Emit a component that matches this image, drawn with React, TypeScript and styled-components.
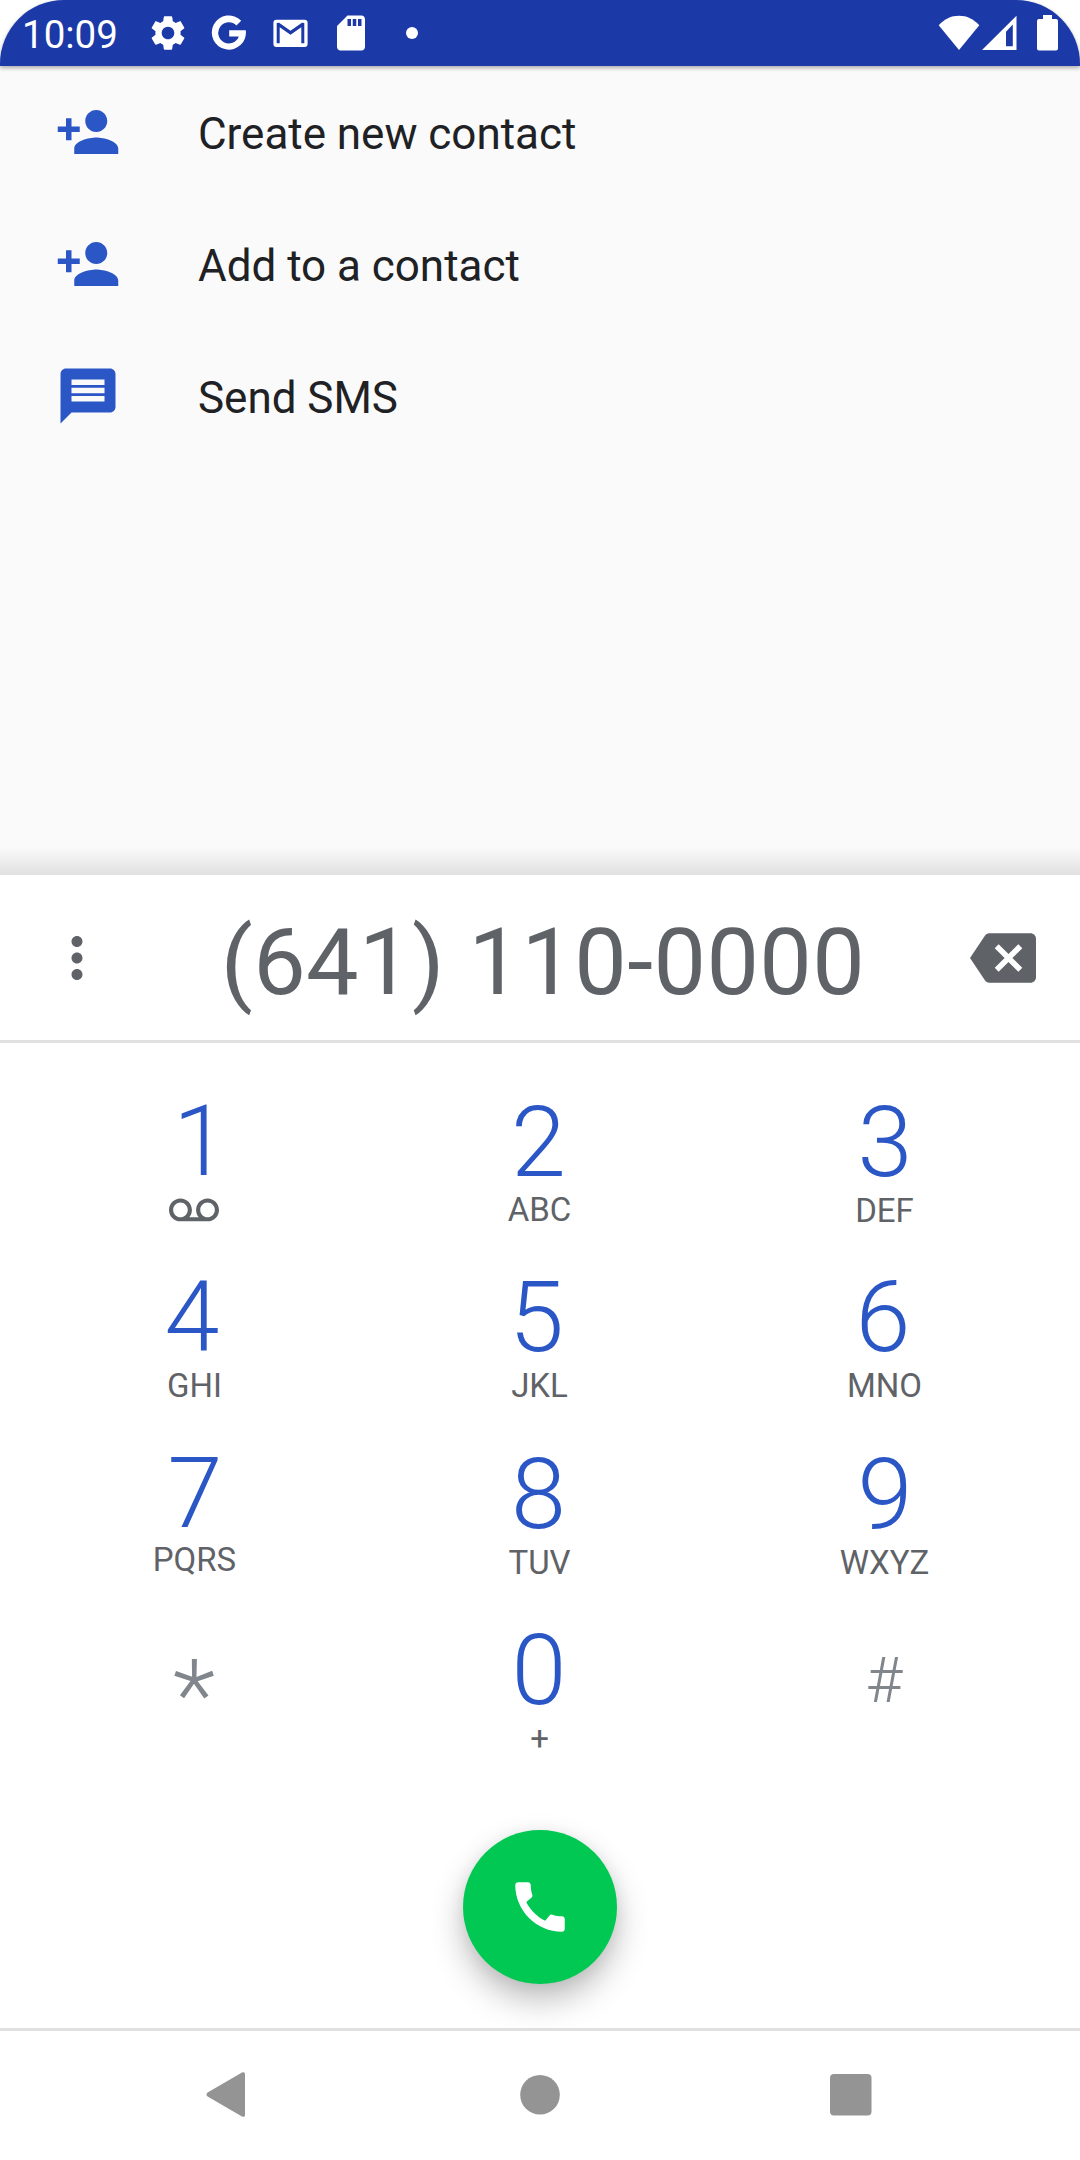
import React from "react";
import styled, { createGlobalStyle } from "styled-components";

const GlobalStyle = createGlobalStyle`
  html, body { margin: 0; padding: 0; background: #ffffff; }
  *, *::before, *::after { box-sizing: border-box; }
  button { border: 0; padding: 0; margin: 0; background: none; font: inherit; color: inherit; }
`;

const Phone = styled.div`
  width: 1080px;
  height: 2160px;
  display: flex;
  flex-direction: column;
  overflow: hidden;
  background: #ffffff;
  font-family: Roboto, "Noto Sans", sans-serif;
`;

const StatusBar = styled.header`
  position: relative;
  z-index: 1;
  flex: none;
  height: 66px;
  display: flex;
  align-items: center;
  padding-right: 22px;
  padding-left: 22px;
  border-radius: 64px 64px 0 0;
  background: #1c39a8;
  color: #ffffff;
  box-shadow: 0 2px 4px rgba(0, 0, 0, 0.32);
`;

const Clock = styled.span`
  width: 125px;
  font-size: 38.5px;
  line-height: 45px;
  padding-top: 2px;
`;

const Notifications = styled.div`
  display: flex;
  align-items: center;
  gap: 19px;
  flex: 1;
`;

const SystemIcons = styled.div`
  display: flex;
  align-items: center;
`;

const Glyph = styled.svg<{ $w: number; $h?: number; $gap?: number }>`
  display: block;
  flex: none;
  width: ${(p) => p.$w}px;
  height: ${(p) => p.$h ?? p.$w}px;
  margin-left: ${(p) => p.$gap ?? 0}px;
  fill: currentColor;
`;

const Actions = styled.main`
  flex: none;
  height: 809px;
  display: flex;
  flex-direction: column;
  background: #fafafa;
`;

const ActionRow = styled.button`
  flex: none;
  height: 132px;
  display: flex;
  align-items: center;
  gap: 77px;
  padding-left: 55px;
  color: #2a56c6;
  text-align: left;
`;

const ActionLabel = styled.span`
  padding-top: 4px;
  font-size: 44px;
  line-height: 52px;
  letter-spacing: -0.03px;
  color: #202124;
`;

const PanelShadow = styled.div`
  flex: none;
  height: 28px;
  margin-top: auto;
  background: linear-gradient(to bottom, #fafafa, #e0e0e0);
`;

const NumberBar = styled.section`
  flex: none;
  height: 168px;
  display: flex;
  align-items: center;
  padding: 0 44px;
  border-bottom: 3px solid #e1e1e1;
  color: #5f6368;
`;

const NumberText = styled.div`
  flex: 1;
  padding: 8px 0 0 6px;
  font-size: 93.5px;
  line-height: 110px;
  letter-spacing: 0.38px;
  text-align: center;
  white-space: pre;
`;

const Keypad = styled.section`
  flex: none;
  display: grid;
  grid-template-columns: repeat(3, 345px);
  grid-auto-rows: 176px;
  padding: 48px 22px 0;
`;

const Key = styled.button`
  display: flex;
  flex-direction: column;
  align-items: center;
`;

const Digit = styled.span<{ $indent: number; $drop: number }>`
  margin-top: ${(p) => p.$drop}px;
  margin-left: ${(p) => p.$indent}px;
  font-size: 99px;
  font-weight: 300;
  line-height: 100px;
  color: #2a56c6;
`;

const SymbolText = styled.span<{ $top: number; $size: number }>`
  padding-top: ${(p) => p.$top}px;
  padding-right: 1px;
  font-size: ${(p) => p.$size}px;
  font-weight: 300;
  line-height: 74px;
  color: #80868b;
`;

const Letters = styled.span<{ $top: number }>`
  margin-top: ${(p) => p.$top}px;
  font-size: 33px;
  line-height: 40px;
  color: #5f6368;
`;

const VoicemailSlot = styled.span`
  padding-top: 7px;
  padding-right: 1px;
  color: #5f6368;
`;

const CallArea = styled.section`
  flex: 1;
  display: flex;
  justify-content: center;
  padding-top: 35px;
`;

const CallButton = styled.button`
  width: 154px;
  height: 154px;
  display: flex;
  align-items: center;
  justify-content: center;
  border-radius: 50%;
  background: #00c853;
  color: #ffffff;
  box-shadow: 0 16px 32px rgba(0, 0, 0, 0.26), 0 2px 16px rgba(0, 0, 0, 0.06);
`;

const NavBar = styled.nav`
  position: relative;
  flex: none;
  height: 132px;
  display: flex;
  align-items: center;
  padding: 0 0 2px 206px;
  border-top: 3px solid #e0e0e0;
  background: #ffffff;
  color: #949494;
`;

const PERSON_ADD =
  "M15 12c2.21 0 4-1.79 4-4s-1.79-4-4-4-4 1.79-4 4 1.79 4 4 4zm-9-2V7H4v3H1v2h3v3h2v-3h3v-2H6zm9 4c-2.67 0-8 1.34-8 4v2h16v-2c0-2.66-5.33-4-8-4z";
const MESSAGE =
  "M20 2H4c-1.1 0-1.99.9-1.99 2L2 22l4-4h14c1.1 0 2-.9 2-2V4c0-1.1-.9-2-2-2zm-2 12H6v-2h12v2zm0-3H6V9h12v2zm0-3H6V6h12v2z";

const actions = [
  { label: "Create new contact", path: PERSON_ADD },
  { label: "Add to a contact", path: PERSON_ADD },
  { label: "Send SMS", path: MESSAGE },
];

type KeyDef = {
  digit?: string;
  letters?: string;
  top?: number;
  indent?: number;
  drop?: number;
  symbol?: string;
  size?: number;
};

const keys: KeyDef[] = [
  { digit: "1", indent: 12 },
  { digit: "2", indent: -2, drop: 1, letters: "ABC", top: -2 },
  { digit: "3", indent: 1, drop: 1, letters: "DEF", top: -1 },
  { digit: "4", indent: -5, letters: "GHI", top: -1 },
  { digit: "5", indent: -6, letters: "JKL", top: -1 },
  { digit: "6", indent: -3, letters: "MNO", top: -1 },
  { digit: "7", indent: 1, letters: "PQRS", top: -3 },
  { digit: "8", indent: -2, drop: 1, letters: "TUV", top: -1 },
  { digit: "9", indent: 1, drop: 1, letters: "WXYZ", top: -1 },
  { symbol: "*", size: 99, top: 39 },
  { digit: "0", indent: -1, drop: 1, letters: "+", top: -1 },
  { symbol: "#", size: 63, top: 25 },
];

function StatusIcons() {
  return (
    <>
      <Notifications>
        <Glyph $w={42} viewBox="0 0 24 24">
          <path d="M19.14 12.94c.04-.3.06-.61.06-.94 0-.32-.02-.64-.07-.94l2.03-1.58c.18-.14.23-.41.12-.61l-1.92-3.32c-.12-.22-.37-.29-.59-.22l-2.39.96c-.5-.38-1.03-.7-1.62-.94l-.36-2.54c-.04-.24-.24-.41-.48-.41h-3.84c-.24 0-.43.17-.47.41l-.36 2.54c-.59.24-1.13.57-1.62.94l-2.39-.96c-.22-.08-.47 0-.59.22L2.74 8.87c-.12.21-.08.47.12.61l2.03 1.58c-.05.3-.09.63-.09.94s.02.64.07.94l-2.03 1.58c-.18.14-.23.41-.12.61l1.92 3.32c.12.22.37.29.59.22l2.39-.96c.5.38 1.03.7 1.62.94l.36 2.54c.05.24.24.41.48.41h3.84c.24 0 .44-.17.47-.41l.36-2.54c.59-.24 1.13-.56 1.62-.94l2.39.96c.22.08.47 0 .59-.22l1.92-3.32c.12-.22.07-.47-.12-.61l-2.01-1.58zM12 15.6c-1.98 0-3.6-1.62-3.6-3.6s1.62-3.6 3.6-3.6 3.6 1.62 3.6 3.6-1.62 3.6-3.6 3.6z" />
        </Glyph>
        <Glyph $w={42} viewBox="0 0 42 42">
          <path d="M33.2 8.7A17.1 17.1 0 1 0 37.8 18.2H21.2v6.2h9.6A10.6 10.6 0 1 1 28.4 13.4z" />
        </Glyph>
        <Glyph $w={42} viewBox="0 0 42 42">
          <path
            fillRule="evenodd"
            d="M7.4 7.7h28.2a3 3 0 0 1 3 3v21.3a3 3 0 0 1-3 3H7.4a3 3 0 0 1-3-3V10.7a3 3 0 0 1 3-3zM7.7 11v20.3h3V15.2l10.8 7.6 10.8-7.6v16.1h3V11l-2.4-.3-11.4 8-11.4-8z"
          />
        </Glyph>
        <Glyph $w={42} viewBox="0 0 24 24">
          <path d="M18 2h-8L4.02 8 4 20c0 1.1.9 2 2 2h12c1.1 0 2-.9 2-2V4c0-1.1-.9-2-2-2zm-6 6h-2V4h2v4zm3 0h-2V4h2v4zm3 0h-2V4h2v4z" />
        </Glyph>
        <Glyph $w={12} $gap={15} viewBox="0 0 12 12">
          <circle cx="6" cy="6" r="6" />
        </Glyph>
      </Notifications>
      <SystemIcons>
        <Glyph $w={42} $h={36} viewBox="0 0 42 36">
          <path d="M21 35 .7 10.2C6.5 4 13 .7 21 .7S35.5 4 41.3 10.2z" />
        </Glyph>
        <Glyph $w={36} $h={36} $gap={1} viewBox="0 0 36 36">
          <path fillRule="evenodd" d="M35.5.8V35H1zM25 16.8v14.4h6.8V9.5z" />
        </Glyph>
        <Glyph $w={21} $h={36} $gap={20} viewBox="0 0 21 36">
          <path d="M6 0h9v4h4a2 2 0 0 1 2 2v27.5a2 2 0 0 1-2 2H2a2 2 0 0 1-2-2V6a2 2 0 0 1 2-2h4z" />
        </Glyph>
      </SystemIcons>
    </>
  );
}

function DialKey({ digit, letters, top = 0, indent = 0, drop = 0, symbol, size = 63 }: KeyDef) {
  if (symbol) {
    return (
      <Key>
        <SymbolText $top={top} $size={size}>
          {symbol}
        </SymbolText>
      </Key>
    );
  }
  return (
    <Key>
      <Digit $indent={indent} $drop={drop}>
        {digit}
      </Digit>
      {letters ? (
        <Letters $top={top}>{letters}</Letters>
      ) : (
        <VoicemailSlot>
          <Glyph $w={50} $h={24} viewBox="0 5.8 24 11.52">
            <path d="M18.5 6C15.46 6 13 8.46 13 11.5c0 1.33.47 2.55 1.26 3.5H9.74c.79-.95 1.26-2.17 1.26-3.5C11 8.46 8.54 6 5.5 6S0 8.46 0 11.5 2.46 17 5.5 17h13c3.04 0 5.5-2.46 5.5-5.5S21.54 6 18.5 6zm-13 9C3.57 15 2 13.43 2 11.5S3.57 8 5.5 8 9 9.57 9 11.5 7.43 15 5.5 15zm13 0c-1.93 0-3.5-1.57-3.5-3.5S16.57 8 18.5 8 22 9.57 22 11.5 20.43 15 18.5 15z" />
          </Glyph>
        </VoicemailSlot>
      )}
    </Key>
  );
}

export default function App() {
  return (
    <Phone>
      <GlobalStyle />
      <StatusBar>
        <Clock>10:09</Clock>
        <StatusIcons />
      </StatusBar>
      <Actions>
        {actions.map((a) => (
          <ActionRow key={a.label}>
            <Glyph $w={66} viewBox="0 0 24 24">
              <path d={a.path} />
            </Glyph>
            <ActionLabel>{a.label}</ActionLabel>
          </ActionRow>
        ))}
        <PanelShadow />
      </Actions>
      <NumberBar>
        <Glyph $w={66} viewBox="0 0 24 24">
          <path d="M12 8c1.1 0 2-.9 2-2s-.9-2-2-2-2 .9-2 2 .9 2 2 2zm0 2c-1.1 0-2 .9-2 2s.9 2 2 2 2-.9 2-2-.9-2-2-2zm0 6c-1.1 0-2 .9-2 2s.9 2 2 2 2-.9 2-2-.9-2-2-2z" />
        </Glyph>
        <NumberText>(641) 110-0000</NumberText>
        <Glyph $w={66} viewBox="0 0 24 24">
          <path d="M22 3H7c-.69 0-1.23.35-1.59.88L0 12l5.41 8.11c.36.53.9.89 1.59.89h15c1.1 0 2-.9 2-2V5c0-1.1-.9-2-2-2zm-3 12.59L17.59 17 14 13.41 10.41 17 9 15.59 12.59 12 9 8.41 10.41 7 14 10.59 17.59 7 19 8.41 15.41 12 19 15.59z" />
        </Glyph>
      </NumberBar>
      <Keypad>
        {keys.map((k) => (
          <DialKey key={k.digit ?? k.symbol} {...k} />
        ))}
      </Keypad>
      <CallArea>
        <CallButton aria-label="Call">
          <Glyph $w={66} viewBox="0 0 24 24">
            <path d="M20.01 15.38c-1.23 0-2.42-.2-3.53-.56-.35-.12-.74-.03-1.01.24l-1.57 1.97c-2.83-1.35-5.48-3.9-6.89-6.83l1.95-1.66c.27-.28.35-.67.24-1.02-.37-1.11-.56-2.3-.56-3.53 0-.54-.45-.99-.99-.99H4.19C3.65 3 3 3.24 3 3.99 3 13.28 10.73 21 20.01 21c.71 0 .99-.63.99-1.18v-3.45c0-.54-.45-.99-.99-.99z" />
          </Glyph>
        </CallButton>
      </CallArea>
      <NavBar>
        <Glyph $w={40} $h={45} viewBox="0 0 40 45">
          <path d="M36 .6c1.4-.9 3-.2 3 1.5v40.8c0 1.700-1.600 2.400-3 1.500L1.600 24.600c-1.500-.9-1.500-3.300 0-4.200z" />
        </Glyph>
        <Glyph $w={40} $gap={274} viewBox="0 0 40 40">
          <circle cx="20" cy="19.8" r="19.8" />
        </Glyph>
        <Glyph $w={42} $gap={270} viewBox="0 0 42 42">
          <rect width="41.5" height="41.5" rx="4" />
        </Glyph>
      </NavBar>
    </Phone>
  );
}
